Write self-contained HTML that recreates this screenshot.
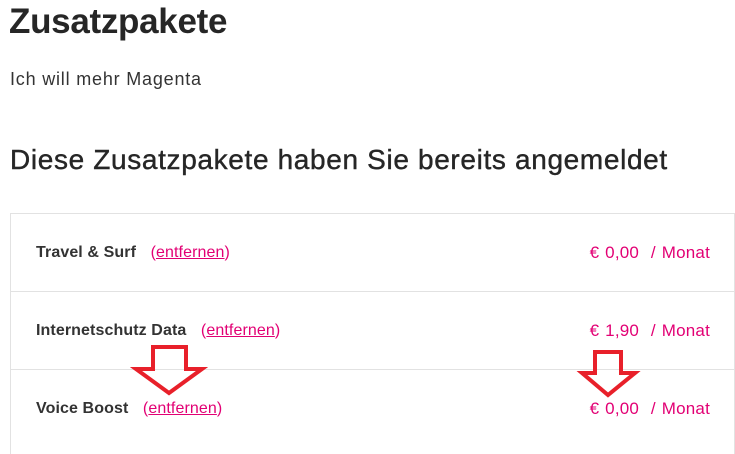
<!DOCTYPE html><html><head><meta charset="utf-8"><style>
body{margin:0;width:735px;height:445px;overflow:hidden;background:#fff;font-family:"Liberation Sans",sans-serif;color:#262626;position:relative}
.a{position:absolute;white-space:nowrap}
h1{position:absolute;left:9px;top:2px;margin:0;font-size:35px;font-weight:bold;letter-spacing:-0.3px}
.box{position:absolute;left:10px;top:213px;width:723px;height:240px;border:1px solid #e2e2e2;border-bottom:none}
.row{position:absolute;left:0;width:723px;height:77px;border-bottom:1px solid #e2e2e2}
.n{position:absolute;left:25px;font-size:16px;font-weight:bold;color:#333;letter-spacing:0.1px}
.l{color:#e20074;font-weight:normal;margin-left:10px}
.p{position:absolute;right:24px;font-size:17px;color:#e20074;letter-spacing:0.2px;word-spacing:1px}
</style></head><body>
<h1>Zusatzpakete</h1>
<div class="a" style="left:10px;top:69px;font-size:18px;color:#333;letter-spacing:0.8px">Ich will mehr Magenta</div>
<div class="a" style="left:10px;top:144px;font-size:28px;color:#262626;letter-spacing:0.65px;-webkit-text-stroke:0.4px #262626">Diese Zusatzpakete haben Sie bereits angemeldet</div>
<div class="box">
<div class="row" style="top:0"><span class="n" style="top:30px">Travel &amp; Surf <span class="l">(<u>entfernen</u>)</span></span><span class="p" style="top:29px">€ 0,00 &nbsp;/ Monat</span></div>
<div class="row" style="top:78px"><span class="n" style="top:30px">Internetschutz Data <span class="l">(<u>entfernen</u>)</span></span><span class="p" style="top:29px">€ 1,90 &nbsp;/ Monat</span></div>
<div class="row" style="top:156px;border:none"><span class="n" style="top:30px">Voice Boost <span class="l">(<u>entfernen</u>)</span></span><span class="p" style="top:29px">€ 0,00 &nbsp;/ Monat</span></div>
</div>
<svg width="735" height="445" style="position:absolute;left:0;top:0">
<polygon points="153,347 186,347 186,369 202,369 169,393 136,369 153,369" fill="none" stroke="#e8202a" stroke-width="4"/>
<polygon points="595,352 621,352 621,373 635,373 608,395 582,373 595,373" fill="none" stroke="#e8202a" stroke-width="4"/>
</svg>
</body></html>
